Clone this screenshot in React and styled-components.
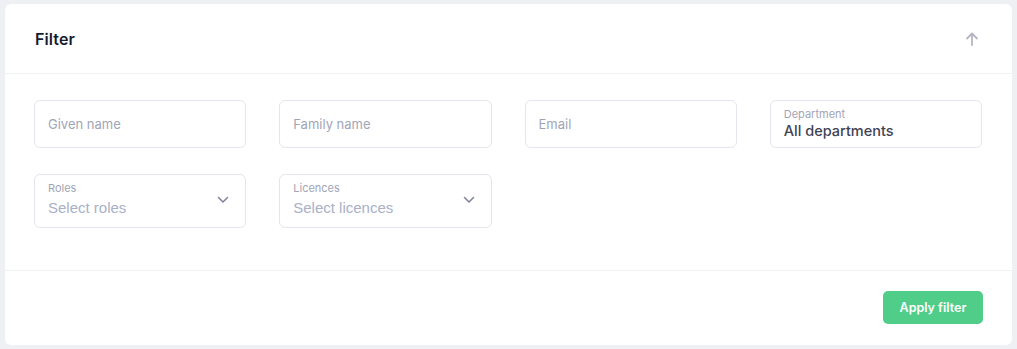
import React from "react";
import styled, { createGlobalStyle } from "styled-components";

const Global = createGlobalStyle`
  html, body { margin: 0; padding: 0; background: #eef0f4; }
  body { font-family: "Inter", "Noto Sans", sans-serif; }
  * { box-sizing: border-box; }
`;

const Page = styled.div`
  padding: 4px 5px 4px 5px;
  width: 1017px;
`;

const Card = styled.div`
  background: #ffffff;
  border-radius: 6px;
  width: 1007px;
  overflow: hidden;
`;

const Header = styled.div`
  display: flex;
  align-items: center;
  justify-content: space-between;
  height: 70px;
  padding: 0 32px 0 30px;
  border-bottom: 1px solid #eff2f5;
`;

const Title = styled.h3`
  margin: 0;
  font-size: 16px;
  font-weight: 600;
  color: #181c32;
  letter-spacing: 0.1px;
`;

const IconButton = styled.button`
  border: 0;
  background: transparent;
  padding: 0;
  display: flex;
  color: #b5b5c3;
  cursor: pointer;
`;

const Body = styled.div`
  padding: 26px 30px 42px 29px;
  display: grid;
  grid-template-columns: repeat(4, 1fr);
  column-gap: 33px;
  row-gap: 26px;
  border-bottom: 1px solid #eff2f5;
`;

const Field = styled.div`
  position: relative;
  height: ${(p) => (p.$tall ? "54px" : "48px")};
  border: 1px solid #e4e6ef;
  border-radius: 6px;
  display: flex;
  flex-direction: column;
  justify-content: ${(p) => (p.$floating ? "flex-start" : "center")};
  padding: ${(p) => (p.$floating ? "6px 13px 0 13px" : "0 13px")};
`;

const Placeholder = styled.span`
  font-size: 13px;
  color: #a1a5b7;
`;

const Label = styled.span`
  font-size: 11px;
  line-height: 14px;
  color: #a1a5b7;
`;

const Value = styled.span`
  font-size: ${(p) => (p.$select ? "15px" : "14.5px")};
  line-height: 20px;
  margin-top: ${(p) => (p.$select ? "3px" : "0px")};
  color: ${(p) => (p.$muted ? "#a9b0c8" : "#3f4254")};
  font-family: ${(p) =>
    p.$select ? '"Liberation Sans", Arial, sans-serif' : '"Inter", sans-serif'};
  font-weight: ${(p) => (p.$select ? 400 : 500)};
`;

const Chevron = styled.span`
  position: absolute;
  right: 16px;
  top: 21px;
  display: flex;
  color: #7e8299;
`;

const Footer = styled.div`
  display: flex;
  justify-content: flex-end;
  padding: 20px 29px 21px 29px;
`;

const Button = styled.button`
  width: 100px;
  height: 33px;
  border: 0;
  border-radius: 5px;
  background: #50cd89;
  color: #ffffff;
  font-family: "Inter", sans-serif;
  font-size: 12.5px;
  font-weight: 600;
  cursor: pointer;
`;

const ArrowUp = () => (
  <svg width="16" height="16" viewBox="0 0 16 16" fill="none">
    <path d="M8 14V3M3 7.5L8 2.5L13 7.5" stroke="currentColor" strokeWidth="1.8" strokeLinecap="round" strokeLinejoin="round" />
  </svg>
);

const ChevronDown = () => (
  <svg width="12" height="8" viewBox="0 0 12 8" fill="none">
    <path d="M1.5 1.5L6 6L10.5 1.5" stroke="currentColor" strokeWidth="1.5" strokeLinecap="round" strokeLinejoin="round" />
  </svg>
);

export default function App() {
  return (
    <>
      <Global />
      <Page>
        <Card>
          <Header>
            <Title>Filter</Title>
            <IconButton aria-label="Collapse">
              <ArrowUp />
            </IconButton>
          </Header>
          <Body>
            <Field><Placeholder>Given name</Placeholder></Field>
            <Field><Placeholder>Family name</Placeholder></Field>
            <Field><Placeholder>Email</Placeholder></Field>
            <Field $floating>
              <Label>Department</Label>
              <Value>All departments</Value>
            </Field>
            <Field $floating $tall>
              <Label>Roles</Label>
              <Value $select $muted>Select roles</Value>
              <Chevron><ChevronDown /></Chevron>
            </Field>
            <Field $floating $tall>
              <Label>Licences</Label>
              <Value $select $muted>Select licences</Value>
              <Chevron><ChevronDown /></Chevron>
            </Field>
          </Body>
          <Footer>
            <Button>Apply filter</Button>
          </Footer>
        </Card>
      </Page>
    </>
  );
}
